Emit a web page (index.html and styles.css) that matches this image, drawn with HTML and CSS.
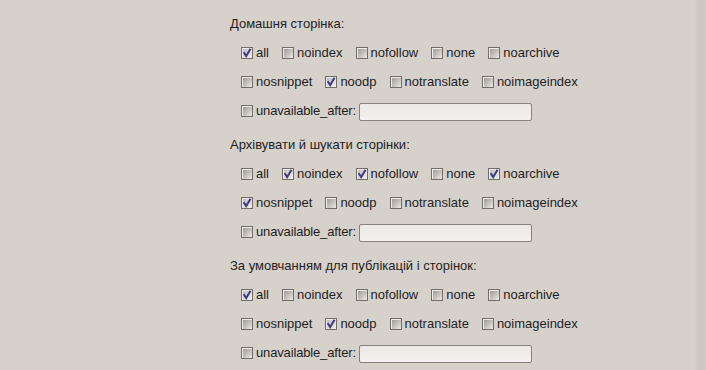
FILE: index.html
```html
<!DOCTYPE html>
<html lang="uk">
<head>
<meta charset="utf-8">
<title>Robots meta</title>
<link rel="stylesheet" href="styles.css">
</head>
<body>
<div class="page">
  <div class="main">
    <section class="group">
      <div class="heading">Домашня сторінка:</div>
      <div class="row">
        <label class="opt"><span class="box on"><svg viewBox="0 0 10 10"><path d="M2.2 5 L4.2 8 L8 1.5" /></svg></span>all</label>
        <label class="opt"><span class="box"></span>noindex</label>
        <label class="opt"><span class="box"></span>nofollow</label>
        <label class="opt"><span class="box"></span>none</label>
        <label class="opt"><span class="box"></span>noarchive</label>
      </div>
      <div class="row">
        <label class="opt"><span class="box"></span>nosnippet</label>
        <label class="opt"><span class="box on"><svg viewBox="0 0 10 10"><path d="M2.2 5 L4.2 8 L8 1.5" /></svg></span>noodp</label>
        <label class="opt"><span class="box"></span>notranslate</label>
        <label class="opt"><span class="box"></span>noimageindex</label>
      </div>
      <div class="row tight">
        <label class="opt"><span class="box"></span>unavailable_after:</label>
        <input class="date" type="text">
      </div>
    </section>
    <section class="group">
      <div class="heading">Архівувати й шукати сторінки:</div>
      <div class="row">
        <label class="opt"><span class="box"></span>all</label>
        <label class="opt"><span class="box on"><svg viewBox="0 0 10 10"><path d="M2.2 5 L4.2 8 L8 1.5" /></svg></span>noindex</label>
        <label class="opt"><span class="box on"><svg viewBox="0 0 10 10"><path d="M2.2 5 L4.2 8 L8 1.5" /></svg></span>nofollow</label>
        <label class="opt"><span class="box"></span>none</label>
        <label class="opt"><span class="box on"><svg viewBox="0 0 10 10"><path d="M2.2 5 L4.2 8 L8 1.5" /></svg></span>noarchive</label>
      </div>
      <div class="row">
        <label class="opt"><span class="box on"><svg viewBox="0 0 10 10"><path d="M2.2 5 L4.2 8 L8 1.5" /></svg></span>nosnippet</label>
        <label class="opt"><span class="box"></span>noodp</label>
        <label class="opt"><span class="box"></span>notranslate</label>
        <label class="opt"><span class="box"></span>noimageindex</label>
      </div>
      <div class="row tight">
        <label class="opt"><span class="box"></span>unavailable_after:</label>
        <input class="date" type="text">
      </div>
    </section>
    <section class="group">
      <div class="heading">За умовчанням для публікацій і сторінок:</div>
      <div class="row">
        <label class="opt"><span class="box on"><svg viewBox="0 0 10 10"><path d="M2.2 5 L4.2 8 L8 1.5" /></svg></span>all</label>
        <label class="opt"><span class="box"></span>noindex</label>
        <label class="opt"><span class="box"></span>nofollow</label>
        <label class="opt"><span class="box"></span>none</label>
        <label class="opt"><span class="box"></span>noarchive</label>
      </div>
      <div class="row">
        <label class="opt"><span class="box"></span>nosnippet</label>
        <label class="opt"><span class="box on"><svg viewBox="0 0 10 10"><path d="M2.2 5 L4.2 8 L8 1.5" /></svg></span>noodp</label>
        <label class="opt"><span class="box"></span>notranslate</label>
        <label class="opt"><span class="box"></span>noimageindex</label>
      </div>
      <div class="row tight">
        <label class="opt"><span class="box"></span>unavailable_after:</label>
        <input class="date" type="text">
      </div>
    </section>
  </div>
  <div class="edge"></div>
</div>
</body>
</html>
```

FILE: styles.css
```css
html, body {
  margin: 0;
  padding: 0;
  height: 100%;
  overflow: hidden;
}
body {
  background: #d7d1cc;
  font-family: "Liberation Sans", Arial, sans-serif;
  font-size: 13px;
  color: #1e1e1e;
}
.page {
  display: flex;
  height: 100%;
}
.main {
  flex: 1;
  padding: 16px 0 0 230px;
  display: flex;
  flex-direction: column;
  gap: 12px;
}
.edge {
  width: 11px;
  background: linear-gradient(to right, #d3cdc8, #cdc7c2 40%, #d0cac5);
}
.group {
  display: flex;
  flex-direction: column;
}
.heading {
  line-height: 16px;
  height: 16px;
  margin-bottom: 6px;
}
.row {
  height: 29px;
  display: flex;
  align-items: center;
  gap: 13px;
  padding-left: 11px;
}
.row.tight {
  gap: 3px;
}
.opt {
  display: flex;
  align-items: center;
  gap: 3px;
  line-height: 15px;
}
.row.tight .opt {
  letter-spacing: -0.15px;
}
.box {
  width: 10px;
  height: 10px;
  border: 1px solid #716c68;
  background: linear-gradient(135deg, #969290 0%, #c4c1bd 55%, #eceae7 100%);
  box-shadow: inset 1px 1px 0 #efedeb;
  display: flex;
  flex-shrink: 0;
}
.box.on {
  background: linear-gradient(135deg, #bdbab6 0%, #dedcd9 60%, #f3f2f0 100%);
}
.box svg {
  width: 10px;
  height: 10px;
}
.box svg path {
  fill: none;
  stroke: #3d3b86;
  stroke-width: 2;
  stroke-linecap: square;
}
.date {
  margin: 2px 0 0 0;
  width: 173px;
  height: 18px;
  box-sizing: border-box;
  border: 1px solid #88827d;
  border-radius: 2px;
  background: linear-gradient(#ebe8e5, #f3f1ef);
  padding: 0 3px;
  font: inherit;
}
```
